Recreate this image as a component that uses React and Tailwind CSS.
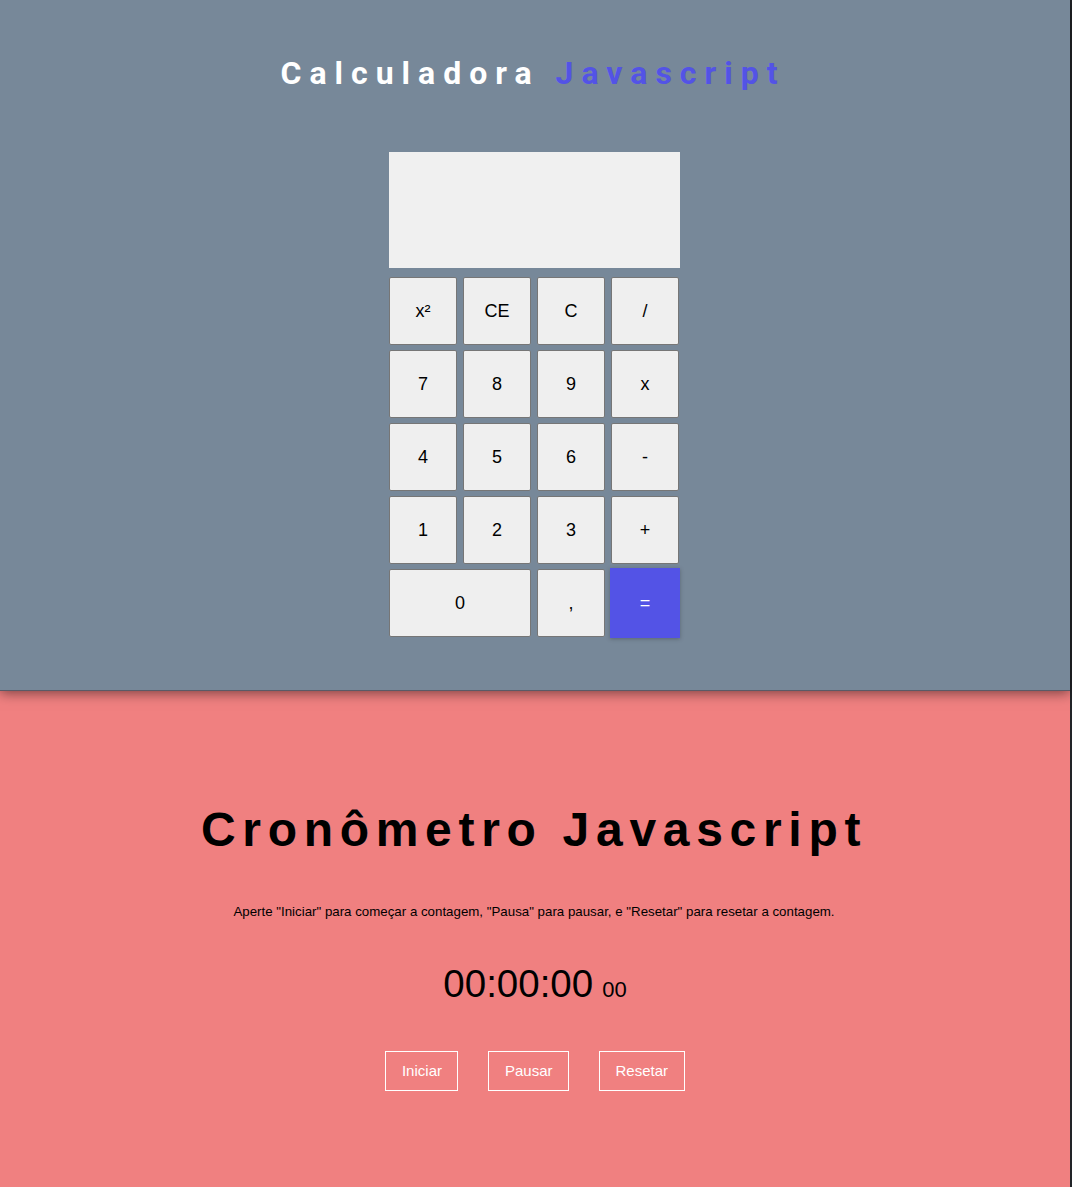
import React from "react";

const keyBase =
  "h-[68px] flex items-center justify-center bg-[#efefef] border border-[#767676] rounded-[2px] text-[18px] text-black";

export default function App() {
  const rows = [
    ["x²", "CE", "C", "/"],
    ["7", "8", "9", "x"],
    ["4", "5", "6", "-"],
    ["1", "2", "3", "+"],
  ];
  return (
    <div className="w-[1072px] min-h-[1187px] flex bg-[#222428]" style={{ fontFamily: '"Liberation Sans", Arial, sans-serif' }}>
      <div className="w-[1070px] flex flex-col">
        <section className="relative z-10 bg-[#778899] h-[691px] flex flex-col items-center shadow-[0_2px_12px_rgba(0,0,0,0.5)] border-b border-[#5a5a66]">
          <h1
            className="mt-[54px] mr-[4px] text-[32px] leading-[38px] font-bold tracking-[8px] text-white"
            style={{ fontFamily: 'Roboto, "Liberation Sans", sans-serif' }}
          >
            Calculadora <span className="text-[#5353e6]">Javascript</span>
          </h1>
          <div className="mt-[60px] w-[292px] flex flex-col">
            <div className="w-[291px] h-[116px] bg-[#f0f0f0]" />
            <div className="mt-[9px] grid grid-cols-[68px_68px_68px_68px] gap-x-[6px] gap-y-[5px]">
              {rows.flat().map((k, i) => (
                <div key={i} className={keyBase}>
                  {k}
                </div>
              ))}
              <div className={keyBase + " col-span-2"}>0</div>
              <div className={keyBase}>,</div>
              <div className="-m-[1px] h-[70px] flex items-center justify-center bg-[#5353e6] text-white text-[18px] shadow-[0_1px_4px_rgba(0,0,0,0.25)]">
                =
              </div>
            </div>
          </div>
        </section>
        <section className="flex-1 bg-[#f08080] flex flex-col items-center">
          <h2 className="mt-[111px] mr-[2px] text-[48px] leading-[55px] font-bold tracking-[6.7px] text-black">
            Cronômetro Javascript
          </h2>
          <p className="mt-[47px] mr-[2px] text-[13.3px] leading-[15px] text-black">
            Aperte "Iniciar" para começar a contagem, "Pausa" para pausar, e "Resetar" para resetar a contagem.
          </p>
          <div className="mt-[42px] flex items-baseline text-black">
            <span className="text-[38.5px] leading-[46px]">00:00:00</span>
            <span className="ml-[9px] text-[22px] leading-[26px]">00</span>
          </div>
          <div className="mt-[44px] flex gap-[30px]">
            {["Iniciar", "Pausar", "Resetar"].map((b) => (
              <div key={b} className="border border-white text-white text-[15px] leading-[18px] px-[15.5px] py-[10px]">
                {b}
              </div>
            ))}
          </div>
        </section>
      </div>
    </div>
  );
}
